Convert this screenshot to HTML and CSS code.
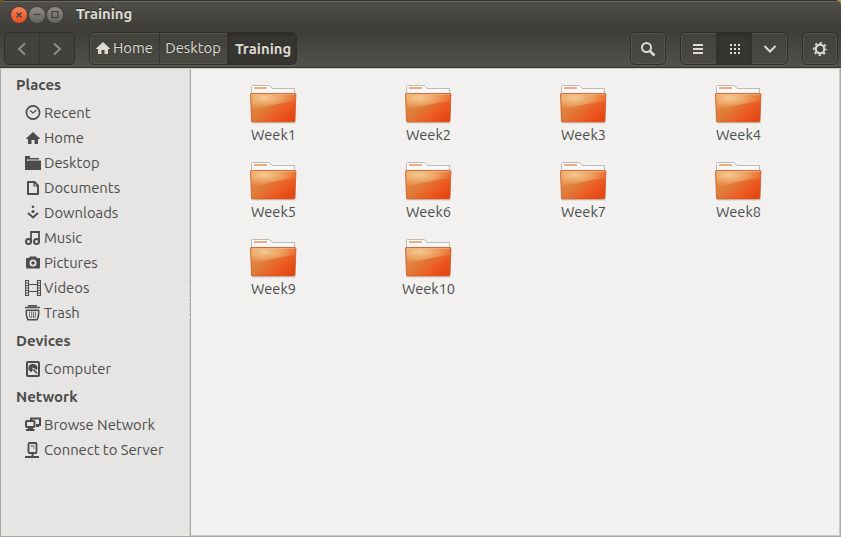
FILE: index.html
```html
<!DOCTYPE html>
<html lang="en">
<head>
<meta charset="utf-8">
<title>Training</title>
<link rel="stylesheet" href="styles.css">
</head>
<body>
<svg class="defs" aria-hidden="true">
  <defs>
    <linearGradient id="front" x1="0" y1="0" x2="1" y2=".75">
      <stop offset="0" stop-color="#e38a42"/><stop offset=".45" stop-color="#e07c3a"/><stop offset=".75" stop-color="#ec5c22"/><stop offset="1" stop-color="#e54612"/>
    </linearGradient>
    <radialGradient id="glow" cx=".3" cy=".25" r=".85">
      <stop offset="0" stop-color="#f6d09a" stop-opacity=".95"/><stop offset=".5" stop-color="#f0b070" stop-opacity=".65"/><stop offset="1" stop-color="#f08040" stop-opacity=".1"/>
    </radialGradient>
    <linearGradient id="paper" x1="0" y1="0" x2="0" y2="1">
      <stop offset="0" stop-color="#fff"/><stop offset="1" stop-color="#ececec"/>
    </linearGradient>
    <symbol id="folder" viewBox="0 0 48 40">
      <path d="M2 38H46" stroke="#000" stroke-opacity=".13"/>
      <path d="M1.500 12V1.500Q1.500.5 2.500.5H18.500Q20 .5 21 2L22 3.500H44.500V12Z" fill="url(#paper)" stroke="#b9b9b7"/>
      <path d="M4 3h13" stroke="#eeaa80" stroke-width="2"/>
      <path d="M.5 9Q.5 8.500 1.500 8.500H45Q46 8.500 45.900 9.500L45 36Q45 37 44 37H2Q1.500 37 1.500 36Z" fill="url(#front)"/>
      <path d="M1 9H45.500L45 16Q29 18 1.600 25Z" fill="url(#glow)"/>
      <path d="M.5 9Q.5 8.500 1.500 8.500H45Q46 8.500 45.900 9.500L45 36Q45 37 44 37H2Q1.500 37 1.500 36Z" fill="none" stroke="#c5602f" stroke-opacity=".85"/>
      <path d="M2 9.500H45" stroke="#f4bd8b" stroke-opacity=".65"/>
    </symbol>
    <symbol id="home" viewBox="0 0 16 16"><path fill="currentColor" d="M8 2 15 8.500V9H13V14H9.500V10H6.500V14H3V9H1V8.500Z"/></symbol>
  </defs>
</svg>
<div class="window">
  <header class="titlebar">
    <span class="control close"><svg viewBox="0 0 16 16"><path d="m5.500 5.500 5 5m0-5-5 5"/></svg></span>
    <span class="control"><svg viewBox="0 0 16 16"><path d="M4.500 7.500h7"/></svg></span>
    <span class="control"><svg viewBox="0 0 16 16"><path d="M5 4.500h6v6h-6z"/></svg></span>
    <h1>Training</h1>
  </header>
  <nav class="toolbar">
    <div class="group history">
      <button aria-label="Back"><svg viewBox="0 0 16 16" class="line"><path d="m11 2.500-6 5.500 6 5.500"/></svg></button>
      <button aria-label="Forward"><svg viewBox="0 0 16 16" class="line"><path d="m5 2.500 6 5.500-6 5.500"/></svg></button>
    </div>
    <div class="group path">
      <button class="crumb-home"><svg><use href="#home"/></svg><span>Home</span></button>
      <button class="crumb-desktop">Desktop</button>
      <button class="crumb-current active">Training</button>
    </div>
    <div class="group single search"><button aria-label="Search"><svg viewBox="0 0 16 16" class="line"><circle cx="6.500" cy="6.500" r="4.500"/><path d="m9.800 9.800 4.700 4.700" stroke-width="2.500"/></svg></button></div>
    <div class="group views">
      <button aria-label="List"><svg viewBox="0 0 16 16" class="line"><path d="M3 4h10M3 8h10M3 12h10"/></svg></button>
      <button class="active" aria-label="Grid"><svg viewBox="0 0 16 16" class="line"><path d="M4 4h10M4 8h10M4 12h10" stroke-dasharray="2 2"/></svg></button>
      <button aria-label="Options"><svg viewBox="0 0 16 16" class="line"><path d="m2.500 5 5.500 5.500L13.500 5"/></svg></button>
    </div>
    <div class="group single"><button aria-label="Settings"><svg viewBox="0 0 16 16" class="line"><circle cx="8" cy="8" r="4.300" stroke-width="2.200"/><circle cx="8" cy="8" r="6.200" stroke-width="1.800" stroke-dasharray="2.200 2.670" stroke-dashoffset="1.100"/></svg></button></div>
  </nav>
  <div class="content">
    <aside class="sidebar">
      <h2>Places</h2>
      <ul>
        <li><svg viewBox="0 0 16 16" class="line"><circle cx="8" cy="7.500" r="6.600" stroke-width="1.700"/><path d="M5 5.500 8 8l3.500-3" stroke-width="1.200"/></svg><span>Recent</span></li>
        <li><svg><use href="#home"/></svg><span>Home</span></li>
        <li><svg viewBox="0 0 16 16"><path d="M0 1H5V3H14V4.500H2V15H0Z M3 5.500H16V15H3Z"/><path d="M1 6H3V15H1Z"/></svg><span>Desktop</span></li>
        <li><svg viewBox="0 0 16 16" class="line"><path d="M3 2h6.500L13 5.500V14H3z" stroke-linejoin="round"/><path d="M9 2v4h4" stroke-width="1.200"/></svg><span>Documents</span></li>
        <li><svg viewBox="0 0 16 16" class="line"><path d="m3 8 5 4.500L13 8"/><circle cx="8" cy="1.800" r="1.300" class="solid"/><circle cx="8" cy="6.500" r="1.600" class="solid"/></svg><span>Downloads</span></li>
        <li><svg viewBox="0 0 16 16" class="line"><path d="M6 11V2h8v9" stroke-width="1.800"/><circle cx="3.500" cy="11.500" r="2.500"/><circle cx="11.500" cy="11.500" r="2.500"/></svg><span>Music</span></li>
        <li><svg viewBox="0 0 16 16"><path fill-rule="evenodd" d="M1 4Q1 3 2 3H4L5 1.500H11L12 3H14Q15 3 15 4V12Q15 13.500 14 13.500H2Q1 13.500 1 12Z M8 4.500A3.500 3.500 0 1 0 8 11.500A3.500 3.500 0 1 0 8 4.500Z"/><circle cx="8" cy="8" r="1.700"/></svg><span>Pictures</span></li>
        <li><svg viewBox="0 0 16 16" class="line"><path d="M.5 0v16M3.500 0v16M12.500 0v16M15.500 0v16M4 4.500h8M4 11.500h8" stroke-width="1.100"/><path d="M2 0v16M14 0v16" stroke-dasharray="1 1.500"/></svg><span>Videos</span></li>
        <li><svg viewBox="0 0 16 16" class="line"><path d="M0 2.500h15M3 .8h9" stroke-width="1.600"/><path d="M1 5.200h13M1.400 5Q.8 11 3 14.700H12Q14.200 11 13.600 5" stroke-width="1.500"/><path d="M4.800 6.500Q3.500 10 5.300 13M10.200 6.500Q11.500 10 9.700 13M6.700 6.500v6.500M8.500 6.500v6.500" stroke-width=".8"/></svg><span>Trash</span></li>
      </ul>
      <h2>Devices</h2>
      <ul>
        <li><svg viewBox="0 0 16 16" class="line"><rect x="2" y="1" width="12" height="14" rx="1"/><path class="solid" d="M8 3A4 4 0 1 0 7 11L8 8Q6.500 7 7.500 6.500L9.500 7.500L12 9A4 4 0 0 0 8 3Z"/><path d="m8.500 8.500 3.500 4" stroke-width="1.700"/></svg><span>Computer</span></li>
      </ul>
      <h2>Network</h2>
      <ul>
        <li><svg viewBox="0 0 16 16" class="line"><rect x="1" y="4" width="8.500" height="6" rx="1"/><path d="M6 3V1.500h9V8h-4M1 13h8.500"/><path d="M3 10h5v3H3zM11 8h3v2h-3z" class="solid"/></svg><span>Browse Network</span></li>
        <li><svg viewBox="0 0 16 16" class="line"><rect x="3.500" y="1" width="8" height="10" rx="1" stroke-width="1.800"/><path d="M5.500 4h4" stroke-width="1"/><path d="M7.500 11v4M0 15h14"/><path d="M8 6h1.500" stroke-width="1"/></svg><span>Connect to Server</span></li>
      </ul>
    </aside>
    <div class="splitter"><i></i></div>
    <main class="files">
      <figure><svg><use href="#folder"/></svg><figcaption>Week1</figcaption></figure>
      <figure><svg><use href="#folder"/></svg><figcaption>Week2</figcaption></figure>
      <figure><svg><use href="#folder"/></svg><figcaption>Week3</figcaption></figure>
      <figure><svg><use href="#folder"/></svg><figcaption>Week4</figcaption></figure>
      <figure><svg><use href="#folder"/></svg><figcaption>Week5</figcaption></figure>
      <figure><svg><use href="#folder"/></svg><figcaption>Week6</figcaption></figure>
      <figure><svg><use href="#folder"/></svg><figcaption>Week7</figcaption></figure>
      <figure><svg><use href="#folder"/></svg><figcaption>Week8</figcaption></figure>
      <figure><svg><use href="#folder"/></svg><figcaption>Week9</figcaption></figure>
      <figure><svg><use href="#folder"/></svg><figcaption>Week10</figcaption></figure>
    </main>
  </div>
</div>
</body>
</html>
```
FILE: styles.css
```css
* { box-sizing: border-box; }
body {
  margin: 0;
  background: linear-gradient(90deg, #705a10 50%, #b29448 50%);
  font: 14.6px/20px Ubuntu, "Noto Sans", sans-serif;
  color: #4c4c4c;
}
.defs { position: absolute; width: 0; height: 0; }
.window {
  width: 841px;
  height: 537px;
  display: flex;
  flex-direction: column;
  border-radius: 6px 6px 0 0;
  overflow: hidden;
  background: #3c3b37;
}
.titlebar {
  height: 28px;
  flex: none;
  display: flex;
  align-items: center;
  gap: 2px;
  padding-left: 11px;
  border-top: 1px solid #31302c;
  box-shadow: inset 0 1px #69675f;
  background: linear-gradient(#504f49, #3e3d39);
}
.control {
  width: 16px;
  height: 16px;
  border-radius: 50%;
  background: linear-gradient(#8d8b83, #66645d);
  box-shadow: 0 0 0 .5px #33322e;
}
.control.close { background: linear-gradient(#f68259, #e4501f); }
.control svg { display: block; width: 16px; height: 16px; fill: none; stroke: #3c3b37; stroke-width: 1.2; }
h1 {
  margin: -1px 0 0 11px;
  font-size: 14.8px;
  line-height: 20px;
  color: #dfdbd2;
  text-shadow: 0 -1px #2b2a27;
}
.toolbar {
  height: 40px;
  flex: none;
  display: flex;
  align-items: flex-start;
  padding: 4px 3px 0 4px;
  border-bottom: 1px solid #35342f;
  background: linear-gradient(#3d3c38, #53514a);
}
.group {
  display: flex;
  height: 33px;
  border: 1px solid #302f2b;
  border-radius: 5px;
  box-shadow: inset 0 0 0 1px #55544d, 0 1px #5c5a52;
  background: linear-gradient(#42413c, #4a4942);
  overflow: hidden;
}
button {
  display: flex;
  flex: 1;
  align-items: center;
  justify-content: center;
  margin: 0;
  padding: 0;
  border: 0;
  background: none;
  font: inherit;
  color: #dfdbd2;
  text-shadow: 0 -1px #2b2a27;
}
button + button { border-left: 1px solid #35342f; }
button svg { width: 16px; height: 16px; }
button.active { background: #363531; box-shadow: inset 0 2px 3px #2b2a27; }
.line { fill: none; stroke: currentColor; stroke-width: 2; }
.solid { fill: currentColor; stroke: none; }
.history { width: 71px; box-shadow: 0 1px #57554e; background: #42413c; }
.history button { color: #918e86; }
.path { width: 208px; margin-left: 14px; }
.path button { flex: none; padding-bottom: 2px; }
.path .crumb-home { width: 69px; gap: 2px; padding-right: 1px; font-size: 14.8px; }
.path .crumb-desktop { width: 68px; padding-right: 1px; font-size: 14.8px; }
.path .crumb-current { width: 70px; padding: 0 0 0 1px; font-weight: bold; font-size: 14.8px; }
.single { width: 36px; }
.search { margin-left: auto; margin-right: 14px; }
.views { width: 108px; margin-right: 14px; }
.content {
  flex: 1;
  display: flex;
  min-height: 0;
  border: 1px solid #aaa9a1;
  border-top-color: #d0cfca;
}
.sidebar { width: 188px; background: #e6e5e3; font-size: 14.8px; }
.splitter {
  width: 2px;
  display: flex;
  align-items: center;
  background: linear-gradient(90deg, #d3d2cf 50%, #aaa9a4 50%);
}
.splitter i { width: 1px; height: 31px; background: repeating-linear-gradient(#fff 0 1px, #c4c3c0 1px 2px, #d3d2cf 2px 5px); }
h2 { margin: 0; padding: 6px 0 5px 15px; height: 31px; font-size: 15px; line-height: 20px; }
ul { margin: 0; padding: 0; list-style: none; }
li { display: flex; align-items: center; gap: 3px; height: 25px; padding-left: 24px; white-space: nowrap; }
li svg { width: 16px; height: 16px; flex: none; fill: currentColor; }
li svg.line { fill: none; }
.files {
  flex: 1;
  display: grid;
  grid-template-columns: repeat(4, 155px);
  grid-auto-rows: 77px;
  align-content: start;
  padding: 16px 0 0 5px;
  border: solid #c9c8c2;
  border-width: 0 1px 1px 0;
  background: #f2f1f0;
}
figure { display: flex; flex-direction: column; align-items: center; margin: 0; }
figure svg { width: 48px; height: 40px; }
```
